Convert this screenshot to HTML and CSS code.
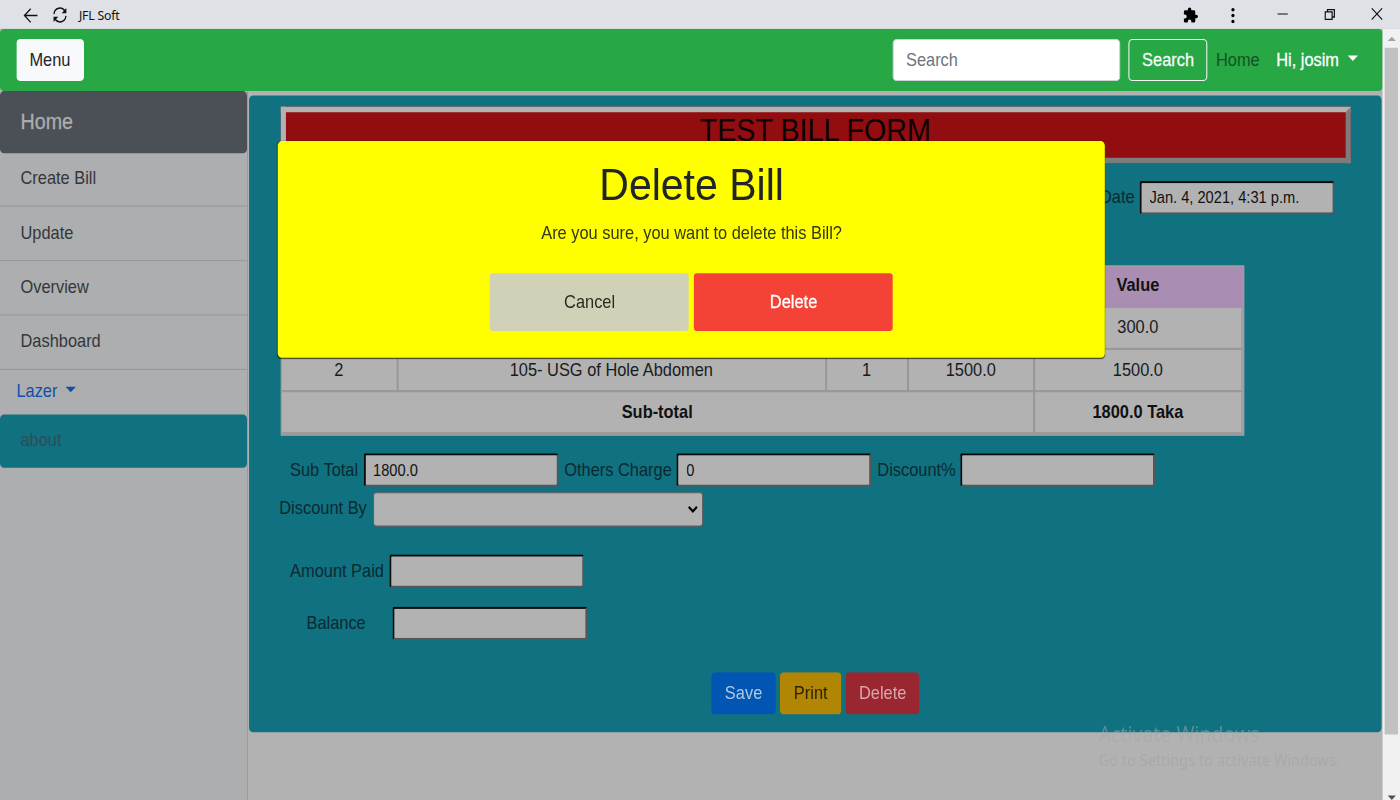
FILE: index.html
```html
<!DOCTYPE html>
<html lang="en">
<head>
<meta charset="utf-8">
<title>JFL Soft</title>
<link rel="stylesheet" href="styles.css">
</head>
<body>
<div class="screen">
  <header class="titlebar">
    <svg class="tb-back" viewBox="0 0 16 16"><path d="M15.500 8H1M8 1L1 8l7 7" fill="none" stroke="#111" stroke-width="1.400"/></svg>
    <svg class="tb-reload" viewBox="0 0 18 18"><path d="M2 8a7 7 0 0 1 13-3M16 10a7 7 0 0 1-13 3" fill="none" stroke="#111" stroke-width="1.500"/><path d="M16.500 1.500v5.500h-5.500zM1.500 16.500V11H7z" fill="#111"/></svg>
    <span class="tb-title">JFL Soft</span>
    <svg class="tb-ext" viewBox="1 0 23 23"><path d="M20.500 11H19V7a2 2 0 0 0-2-2h-4V3.500a2.500 2.500 0 0 0-5 0V5H4a2 2 0 0 0-2 2v3.800h1.500a2.700 2.700 0 0 1 0 5.400H2V20a2 2 0 0 0 2 2h3.800v-1.500a2.700 2.700 0 0 1 5.400 0V22H17a2 2 0 0 0 2-2v-4h1.500a2.500 2.500 0 0 0 0-5z"/></svg>
    <svg class="tb-dots" viewBox="0 0 4 16"><circle cx="2" cy="2" r="1.800"/><circle cx="2" cy="8" r="1.800"/><circle cx="2" cy="14" r="1.800"/></svg>
    <svg class="tb-min" viewBox="0 0 11 11"><path d="M0 5h11" stroke="#111" stroke-width="1.100"/></svg>
    <svg class="tb-max" viewBox="0 0 11 11"><path d="M.6 3h7.400v7.400H.6zM3 3V.6h7.400V8H8" fill="none" stroke="#111" stroke-width="1.300"/></svg>
    <svg class="tb-close" viewBox="0 0 11 11"><path d="M.3.3l10.400 10.400M10.700.3L.3 10.700" stroke="#111" stroke-width="1.100"/></svg>
  </header>
  <div class="viewport">
    <div class="page">
      <nav class="navbar">
        <button class="btn btn-light">Menu</button>
        <input class="search" type="text" placeholder="Search">
        <button class="btn btn-outline">Search</button>
        <a class="nav-home">Home</a>
        <a class="nav-user">Hi, josim<i class="caret"></i></a>
      </nav>
      <div class="columns">
        <aside class="sidebar">
          <div class="side-heading">Home</div>
          <a class="side-item">Create Bill</a>
          <a class="side-item">Update</a>
          <a class="side-item">Overview</a>
          <a class="side-item">Dashboard</a>
          <a class="side-drop">Lazer<i class="caret"></i></a>
          <a class="side-item active">about</a>
        </aside>
        <main class="panel">
          <h3 class="form-title">TEST BILL FORM</h3>
          <div class="row date-row"><label>Date</label><input class="field" value="Jan. 4, 2021, 4:31 p.m."></div>
          <table class="bill">
            <colgroup><col class="c1"><col class="c2"><col class="c3"><col class="c4"><col class="c5"></colgroup>
            <tr class="head"><th></th><th></th><th></th><th></th><th>Value</th></tr>
            <tr><td></td><td></td><td></td><td></td><td>300.0</td></tr>
            <tr><td>2</td><td>105- USG of Hole Abdomen</td><td>1</td><td>1500.0</td><td>1500.0</td></tr>
            <tr><th colspan="4">Sub-total</th><th>1800.0 Taka</th></tr>
          </table>
          <div class="row totals-row">
            <label class="l-sub">Sub Total</label><input class="field" value="1800.0">
            <label class="l-others">Others Charge</label><input class="field" value="0">
            <label class="l-disc">Discount%</label><input class="field">
          </div>
          <div class="row by-row"><label>Discount By</label><div class="select"><svg viewBox="0 0 10 7"><path d="M1 1.200l4 4 4-4" fill="none" stroke="#000" stroke-width="2"/></svg></div></div>
          <div class="row paid-row"><label>Amount Paid</label><input class="field"></div>
          <div class="row balance-row"><label>Balance</label><input class="field"></div>
          <div class="actions"><button class="btn save">Save</button><button class="btn print">Print</button><button class="btn del">Delete</button></div>
        </main>
      </div>
    </div>
    <div class="scrollbar"><i class="arrow-up"></i><i class="thumb"></i><i class="arrow-down"></i></div>
  </div>
  <section class="modal">
    <h1>Delete Bill</h1>
    <p>Are you sure, you want to delete this Bill?</p>
    <div class="modal-actions"><button class="cancel">Cancel</button><button class="confirm">Delete</button></div>
  </section>
  <div class="watermark"><div class="wm-title">Activate Windows</div><div class="wm-text">Go to Settings to activate Windows.</div></div>
</div>
</body>
</html>
```
FILE: styles.css
```css
* { box-sizing: border-box; }
html, body { margin: 0; width: 1400px; height: 800px; overflow: hidden; background: #b2b2b2; }

/* A 1366x720 desktop stretched to the window */
.screen {
  position: relative; width: 1366px; height: 720px; overflow: hidden;
  transform-origin: 0 0; transform: scale(1.02489, 1.11111);
  display: flex; flex-direction: column;
  font: 16px/24px "Liberation Sans", Arial, sans-serif; color: #191b1d;
}
button, input { font-family: inherit; margin: 0; }

.titlebar { height: 26px; background: #dee1e6; display: flex; align-items: center; padding: 0 17.500px 0 22px; flex: none; }
.titlebar svg { flex: none; display: block; }
.tb-back { width: 16px; height: 14px; margin-top: 1px; }
.tb-reload { width: 17px; height: 15px; margin: 1px 0 0 12px; }
.tb-title { font: 12px/16px "Noto Sans", sans-serif; letter-spacing: -.2px; margin: 1px 0 0 10px; color: #111; flex: 1; }
.tb-ext { width: 16px; height: 15px; margin-top: 1px; }
.tb-dots { width: 4px; height: 14px; margin: 1px 41px 0 31px; }
.tb-min { width: 11px; height: 10px; margin-top: 0; }
.tb-max { width: 11px; height: 10px; margin: 0 35px 1px 35px; }
.tb-close { width: 11px; height: 11px; margin-bottom: 1px; }

.viewport { flex: 1; display: flex; min-height: 0; }
.page { width: 1349px; display: flex; flex-direction: column; background: #b2b2b2; }
.navbar { height: 56px; flex: none; background: #28a745; border-radius: 4px; display: flex; align-items: center; padding: 0 24.500px 1px 15.500px; }
.btn { height: 38px; padding: 0 12px; border: 1px solid transparent; border-radius: 4px; font-size: 16px; line-height: 24px; }
.btn-light { background: #f8f9fa; color: #212529; width: 66.500px; margin-right: auto; }
.search { width: 222px; height: 38px; border: 1px solid #ced4da; border-radius: 4px; padding: 0 12px; font-size: 16px; background: #fff; margin-right: 8px; }
.search::placeholder { color: #6c757d; opacity: 1; }
.btn-outline { width: 77.500px; background: transparent; color: #f8f9fa; border-color: #f8f9fa; -webkit-text-stroke: .25px; }
.nav-home { color: #145322; margin: 0 16px 0 8px; }
.nav-user { color: #fff; -webkit-text-stroke: .25px; white-space: nowrap; }
.caret { display: inline-block; margin-left: 8px; vertical-align: 4px; border-top: 5px solid; border-left: 5px solid transparent; border-right: 5px solid transparent; }

.columns { flex: 1; display: flex; min-height: 0; }
.sidebar { width: 242px; flex: none; background: #adaeaf; border-right: 1px solid #9b9b9b; display: flex; flex-direction: column; }
.side-heading { height: 55.500px; background: #4a5056; color: #adaeaf; border-radius: 4px; padding: 13.500px 20px; font-size: 19.200px; line-height: 28px; -webkit-text-stroke: .25px; }
.side-item { height: 48.800px; padding: 11.500px 20px; border-bottom: 1px solid #98999a; color: #33373b; }
.side-drop { height: 40.300px; padding: 7.500px 16px; color: #0f4fa8; }
.side-item.active { background: #107180; border: 0; border-radius: 4px; height: 48px; color: #2f4d55; }

.panel { width: 1105px; height: 573px; margin: 4px 0 0 1px; background: #107180; border-radius: 4px; padding: 10px 30.500px 0 30.500px; }
.form-title { height: 51px; margin: 0; border: 5px solid; border-color: #b2b2b2 #7c7c7c #7c7c7c #b2b2b2; background: #920d10; color: #0d0303; text-align: center; font-size: 28px; font-weight: 400; line-height: 33px; }
.row { display: flex; align-items: center; height: 30.500px; color: #0b2a31; white-space: nowrap; }
.field { width: 190px; height: 30.500px; background: #b2b2b2; border: 2px solid; border-color: #0a0a0a #575757 #575757 #0a0a0a; border-radius: 2px; padding: 1px 7.500px 0; font-size: 14.300px; color: #111; outline: 0; }
.date-row { justify-content: flex-end; margin-top: 15.500px; padding-right: 15.500px; }
.date-row label { margin-right: 5px; }

.bill { width: 940px; height: 153.500px; margin-top: 45.500px; table-layout: fixed; border-collapse: separate; border-spacing: 0; background: #b2b2b2; border: 1px solid #9b9b9d; text-align: center; }
.bill td, .bill th { padding: 0; height: 37.900px; border-right: 2px solid #989898; border-bottom: 2px solid #989898; color: #191b1d; }
.bill th { font-weight: 700; color: #111; }
.bill tr :last-child { border-right-color: #a0a0a2; }
.bill .head th { background: #a98db2; border-color: #a98db2; }
.c1 { width: 114px; } .c2 { width: 418px; } .c3 { width: 80px; } .c4 { width: 123.500px; } .c5 { width: auto; }

.totals-row { margin-top: 15.500px; }
.l-sub { width: 71.500px; margin-left: 9.500px; }
.l-others { width: 109.500px; margin-left: 6px; }
.l-disc { width: 81px; margin-left: 6px; }
.by-row { margin-top: 5px; }
.by-row label { width: 91px; margin-left: -1px; }
.select { width: 322px; height: 30.500px; background: #b2b2b2; border: 1px solid #645e62; border-radius: 3px; display: flex; align-items: center; justify-content: flex-end; padding-right: 4px; }
.select svg { width: 10px; height: 7px; }
.paid-row { margin-top: 25px; }
.paid-row label { width: 97px; margin-left: 9.500px; }
.balance-row { margin-top: 16.500px; }
.balance-row label { width: 83.500px; margin-left: 25.500px; }
.actions { display: flex; gap: 4.300px; margin: 29px 0 0 420.500px; }
.save { width: 63px; background: #0056b2; color: #b2c7e0; }
.print { width: 59.500px; background: #b28605; color: #2a2205; }
.del { width: 72px; background: #9a2631; color: #d5a9ad; }

.scrollbar { flex: 1; background: #f1f1f1; display: flex; flex-direction: column; align-items: center; padding: 7px 0 0; }
.arrow-up { border-bottom: 4px solid #a3a3a3; border-left: 4px solid transparent; border-right: 4px solid transparent; }
.thumb { width: 13px; height: 618px; background: #c1c1c1; margin-top: 5.500px; }
.arrow-down { margin-top: auto; border-top: 4px solid #505050; border-left: 4px solid transparent; border-right: 4px solid transparent; }

.modal { position: absolute; left: 271.300px; top: 126.500px; width: 807px; height: 195.500px; background: #ff0; border-radius: 4px; box-shadow: 0 .5px 1px rgba(40, 40, 0, .8); padding: 15.500px 0 0; text-align: center; }
.modal h1 { margin: 0 0 8px; font-size: 40px; line-height: 48px; font-weight: 400; color: #212529; }
.modal p { margin: 0 0 24px; color: #34380f; }
.modal-actions { display: flex; justify-content: center; gap: 5px; }
.modal-actions button { width: 194px; height: 52px; border: 0; border-radius: 3px; font-size: 16px; }
.cancel { background: #d1d1b7; color: #2b2b22; }
.confirm { background: #f44336; color: #fff; -webkit-text-stroke: .25px; }

.watermark { position: absolute; left: 1072px; top: 647.500px; font-family: "Noto Sans", sans-serif; color: rgba(160, 170, 172, .5); white-space: nowrap; }
.wm-title { font-size: 19px; line-height: 26px; }
.wm-text { font-size: 14px; line-height: 20px; color: #a9a9a9; letter-spacing: .1px; }
```
